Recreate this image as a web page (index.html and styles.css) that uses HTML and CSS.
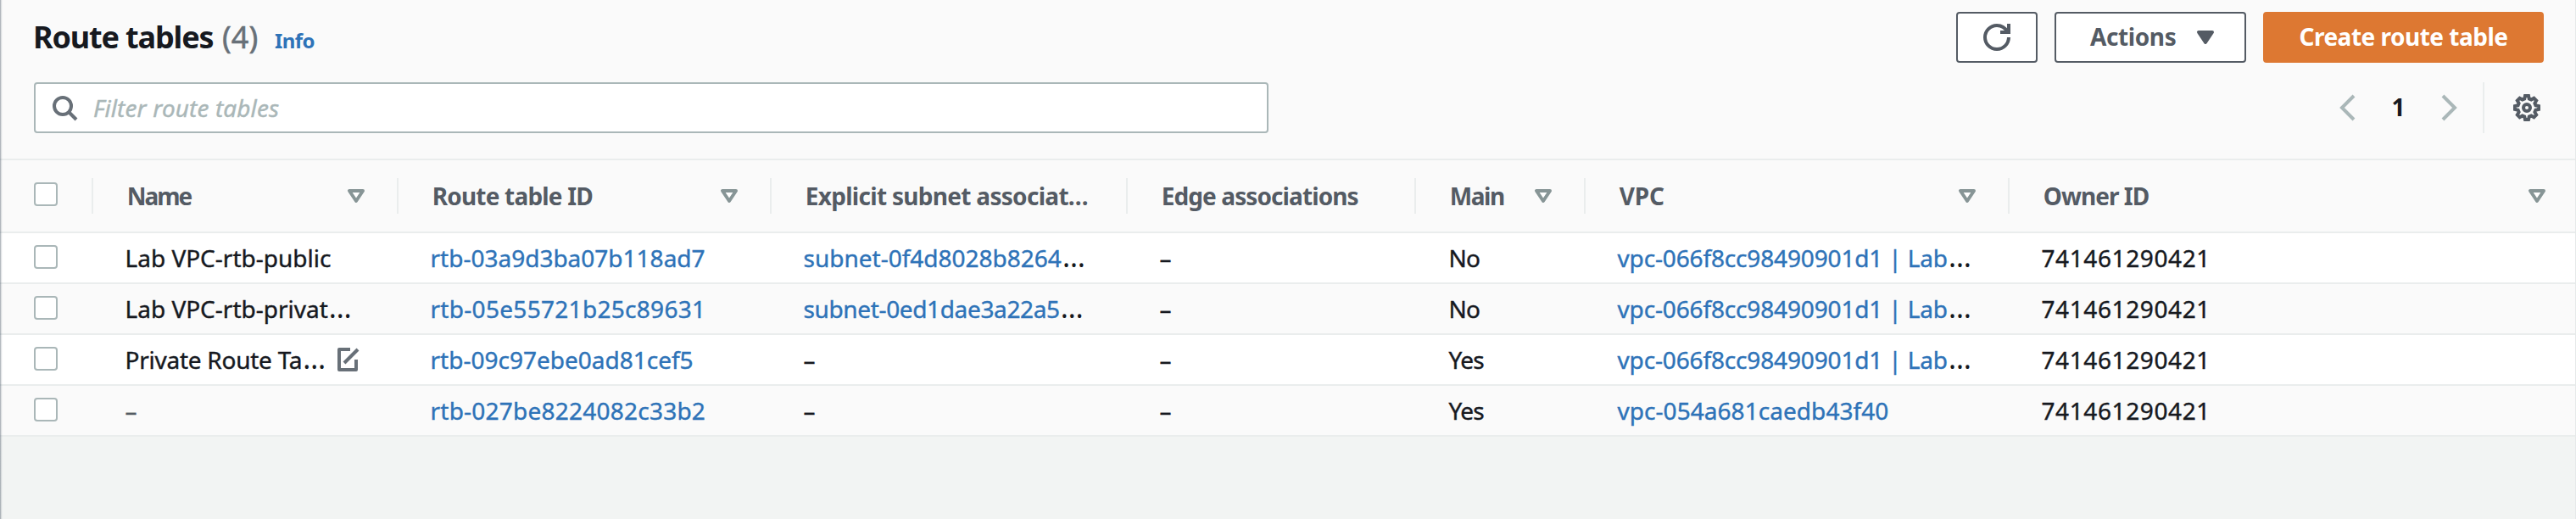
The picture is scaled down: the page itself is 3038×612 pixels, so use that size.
FILE: index.html
```
<!DOCTYPE html>
<html lang="en">
<head>
<meta charset="utf-8">
<title>Route tables</title>
<link rel="stylesheet" href="styles.css">
</head>
<body>
<svg class="defs" width="0" height="0">
  <symbol id="sort" viewBox="0 0 32 32"><path d="M8 10h16l-8 12z" fill="#fff" stroke="#879596" stroke-width="4" stroke-linejoin="round"/></symbol>
</svg>
<main class="panel">
  <header class="top">
    <h1 class="title"><span class="name">Route tables</span><span class="count">(4)</span><a class="info">Info</a></h1>
    <div class="actions">
      <button class="btn refresh" aria-label="Refresh"><svg width="32" height="32" viewBox="0 0 16 16" fill="none" stroke="#545b64" stroke-width="2"><path d="M15 8c0 3.87-3.13 7-7 7s-7-3.13-7-7 3.13-7 7-7c2.7 0 5 1.5 6.2 3.8"/><path d="M10 5h5V0"/></svg></button>
      <button class="btn menu"><span>Actions</span><svg width="32" height="32" viewBox="0 0 32 32"><path d="M8 10h16l-8 12z" fill="#545b64" stroke="#545b64" stroke-width="4" stroke-linejoin="round"/></svg></button>
      <button class="btn primary"><span>Create route table</span></button>
    </div>
  </header>
  <div class="tools">
    <div class="search">
      <svg width="32" height="32" viewBox="0 0 32 32" fill="none" stroke="#687078" stroke-width="4"><circle cx="12" cy="12" r="10"/><path d="M19 19l9 9"/></svg>
      <span class="placeholder">Filter route tables</span>
    </div>
    <nav class="pager">
      <svg width="20" height="32" viewBox="0 0 20 32" fill="none" stroke="#aab7b8" stroke-width="4"><path d="M17 2L3 16l14 14"/></svg>
      <span class="page">1</span>
      <svg width="20" height="32" viewBox="0 0 20 32" fill="none" stroke="#aab7b8" stroke-width="4"><path d="M3 2l14 14L3 30"/></svg>
      <span class="divider"></span>
      <svg width="32" height="32" viewBox="0 0 32 32" fill="none" stroke="#545b64" stroke-width="4"><path d="M14 2h4l.8 3.6 2.4 1 3.2-1.8 2.8 2.8-1.8 3.2 1 2.4L30 14v4l-3.6.8-1 2.4 1.8 3.2-2.8 2.8-3.2-1.8-2.4 1L18 30h-4l-.8-3.6-2.4-1-3.2 1.8-2.8-2.8 1.8-3.2-1-2.4L2 18v-4l3.6-.8 1-2.4-1.8-3.2 2.8-2.8 3.2 1.8 2.4-1z"/><circle cx="16" cy="16" r="4"/></svg>
    </nav>
  </div>
  <div class="row head">
    <div class="cell pick"><i class="box"></i></div>
    <div class="cell"><span class="h-name">Name</span><svg class="sort"><use href="#sort"/></svg></div>
    <div class="cell"><span class="h-id">Route table ID</span><svg class="sort"><use href="#sort"/></svg></div>
    <div class="cell"><span class="h-subnet">Explicit subnet associat…</span></div>
    <div class="cell"><span class="h-edge">Edge associations</span></div>
    <div class="cell"><span class="h-main">Main</span><svg class="sort"><use href="#sort"/></svg></div>
    <div class="cell"><span class="h-vpc">VPC</span><svg class="sort"><use href="#sort"/></svg></div>
    <div class="cell last"><span class="h-owner">Owner ID</span><svg class="sort"><use href="#sort"/></svg></div>
  </div>
  <div class="row">
    <div class="cell pick"><i class="box"></i></div>
    <div class="cell">Lab VPC-rtb-public</div>
    <div class="cell"><a>rtb-03a9d3ba07b118ad7</a></div>
    <div class="cell"><a>subnet-0f4d8028b8264</a><span class="more">…</span></div>
    <div class="cell">–</div>
    <div class="cell main">No</div>
    <div class="cell"><a class="vpc">vpc-066f8cc98490901d1 | Lab</a><span class="more">…</span></div>
    <div class="cell owner">741461290421</div>
  </div>
  <div class="row alt">
    <div class="cell pick"><i class="box"></i></div>
    <div class="cell">Lab VPC-rtb-privat<span class="more">…</span></div>
    <div class="cell"><a class="wide">rtb-05e55721b25c89631</a></div>
    <div class="cell"><a class="tight">subnet-0ed1dae3a22a5</a><span class="more">…</span></div>
    <div class="cell">–</div>
    <div class="cell main">No</div>
    <div class="cell"><a class="vpc">vpc-066f8cc98490901d1 | Lab</a><span class="more">…</span></div>
    <div class="cell owner">741461290421</div>
  </div>
  <div class="row">
    <div class="cell pick"><i class="box"></i></div>
    <div class="cell editable"><span class="snug">Private Route Ta<span class="more">…</span></span><svg width="28" height="28" viewBox="0 0 28 28" fill="none" stroke="#687078" stroke-width="4" stroke-linejoin="round"><path d="M15 2H2v24h20V14"/><path d="M8 18L24 2"/></svg></div>
    <div class="cell"><a>rtb-09c97ebe0ad81cef5</a></div>
    <div class="cell">–</div>
    <div class="cell">–</div>
    <div class="cell main">Yes</div>
    <div class="cell"><a class="vpc">vpc-066f8cc98490901d1 | Lab</a><span class="more">…</span></div>
    <div class="cell owner">741461290421</div>
  </div>
  <div class="row alt">
    <div class="cell pick"><i class="box"></i></div>
    <div class="cell muted">–</div>
    <div class="cell"><a class="roomy">rtb-027be8224082c33b2</a></div>
    <div class="cell">–</div>
    <div class="cell">–</div>
    <div class="cell main">Yes</div>
    <div class="cell"><a class="even">vpc-054a681caedb43f40</a></div>
    <div class="cell owner">741461290421</div>
  </div>
</main>
</body>
</html>
```
FILE: styles.css
```
* { box-sizing: border-box; }
body {
  margin: 0;
  height: 612px;
  overflow: hidden;
  background: #f2f4f3;
  color: #16191f;
  font: 28px/58px "Noto Sans", "Open Sans", sans-serif;
}
.defs { display: block; }
svg { flex: none; }
.panel { position: relative; height: 612px; }
/* panel edge shadow */
.panel::after {
  content: "";
  position: absolute;
  inset: 0;
  pointer-events: none;
  border-right: 1px solid #e6e9e9;
  background: linear-gradient(90deg, rgba(60, 75, 90, .38) 0 1px, rgba(60, 75, 90, .16) 1px 2px, rgba(60, 75, 90, .04) 2px 3px, transparent 3px);
}
.top {
  display: flex;
  justify-content: space-between;
  height: 97px;
  padding: 14px 38px 0 39px;
  background: #fafafa;
}
.title { display: flex; align-items: baseline; height: 60px; margin: 0; font-size: 36px; line-height: 60px; }
.name { width: 223px; letter-spacing: -1.15px; white-space: nowrap; }
.count { width: 62px; font-weight: 400; color: #687078; -webkit-text-stroke: .5px; }
.info { font-size: 24px; letter-spacing: -.6px; }
a { color: #2e73b8; }
.actions { display: flex; gap: 20px; }
.btn {
  display: flex;
  align-items: center;
  height: 60px;
  padding: 0;
  border: 2px solid #545b64;
  border-radius: 4px;
  background: #fff;
  color: #545b64;
  font: bold 28px/54px "Noto Sans", "Open Sans", sans-serif;
}
.btn span { padding-bottom: 2px; }
.refresh { width: 96px; justify-content: center; }
.menu { width: 226px; justify-content: space-between; padding: 0 30px 0 40px; letter-spacing: -.4px; }
.primary { width: 331px; justify-content: center; border-color: #dd7832; background: #dd7832; color: #fff; letter-spacing: -.5px; }
.tools {
  display: flex;
  justify-content: space-between;
  height: 92px;
  padding: 0 42px 0 40px;
  border-bottom: 2px solid #eaeded;
  background: #fafafa;
}
.search {
  display: flex;
  align-items: center;
  gap: 16px;
  width: 1456px;
  height: 60px;
  padding-left: 20px;
  border: 2px solid #aab7b8;
  border-radius: 4px;
  background: #fff;
}
.search svg { margin-top: 4px; }
.placeholder { font-style: italic; color: #aab7b8; letter-spacing: .1px; line-height: 56px; -webkit-text-stroke: .4px; }
.pager { display: flex; align-items: center; height: 60px; }
.page { width: 99px; padding-bottom: 2px; text-align: center; font-weight: 700; }
.divider { width: 2px; height: 60px; margin: 0 34px 0 30px; background: #eaeded; }
.row {
  display: grid;
  grid-template-columns: 110px 360px 440px 420px 340px 200px 500px 1fr;
  height: 60px;
  border-bottom: 2px solid #eaeded;
  background: #fff;
  -webkit-text-stroke: .4px;
}
.row.alt { background: #fafafa; }
.cell { padding-left: 37.5px; white-space: nowrap; }
.pick { display: flex; padding: 14px 0 0 40px; }
.box { width: 28px; height: 28px; border: 2px solid #aab7b8; border-radius: 4px; background: #fff; }
/* trailing ellipsis with wider dots */
.more { margin-left: 1px; font-size: 34px; line-height: 0; letter-spacing: 0; -webkit-text-stroke: 0; }
.wide { letter-spacing: .3px; }
.roomy { letter-spacing: .23px; }
.even { letter-spacing: .05px; }
.tight { letter-spacing: -.36px; }
.snug { letter-spacing: -.25px; }
.vpc { letter-spacing: -.15px; }
.cell.main { padding-left: 38.5px; letter-spacing: -.8px; }
.owner { letter-spacing: .6px; }
.muted { color: #545b64; }
.editable { display: flex; align-items: center; gap: 14px; }
.head { height: 86px; background: #fafafa; color: #545b64; font-weight: 700; -webkit-text-stroke: 0; }
.head .cell {
  position: relative;
  display: flex;
  justify-content: space-between;
  align-items: center;
  padding: 0 34px 0 39.7px;
}
.head .cell > span { padding-bottom: 1px; }
.head .last { padding-right: 30px; }
.head .pick { align-items: flex-start; padding: 26px 0 0 40px; }
/* column separators */
.head .cell:not(.last)::after {
  content: "";
  position: absolute;
  right: 0;
  top: 21px;
  width: 2px;
  height: 42px;
  background: #eaeded;
}
.sort { width: 32px; height: 32px; }
.h-name { letter-spacing: -2px; }
.h-id { letter-spacing: -.8px; }
.h-subnet { letter-spacing: -.7px; }
.h-edge { letter-spacing: -.9px; }
.h-main { letter-spacing: -1.4px; }
.h-vpc { letter-spacing: -.2px; }
.h-owner { letter-spacing: -.95px; }
```
